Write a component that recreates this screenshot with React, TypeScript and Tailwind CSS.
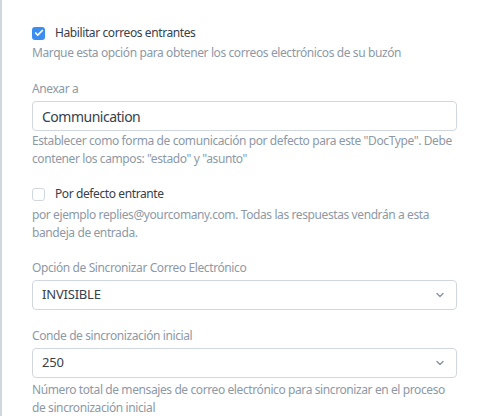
import { ChevronDown, Check } from "lucide-react";

const font = { fontFamily: '"Noto Sans", "Open Sans", sans-serif' };

function CheckRow({ checked, label }: { checked: boolean; label: string }) {
  return (
    <div className="flex items-center h-[18px]">
      {checked ? (
        <span className="w-[13px] h-[13px] rounded-[3px] bg-[#3b8ef0] flex items-center justify-center">
          <Check size={10} strokeWidth={4} className="text-white" />
        </span>
      ) : (
        <span className="w-[13px] h-[13px] rounded-[3px] border border-[#d1d8dd] bg-white" />
      )}
      <span className="ml-[10px] text-[12px] tracking-[-0.4px] text-[#36414c]">{label}</span>
    </div>
  );
}

function Help({ children }: { children: React.ReactNode }) {
  return <p className="text-[12px] leading-[18px] tracking-[-0.4px] text-[#8d99a6]">{children}</p>;
}

function Label({ children }: { children: React.ReactNode }) {
  return <div className="text-[12px] leading-[18px] tracking-[-0.4px] text-[#8d99a6] mb-[3px]">{children}</div>;
}

function Select({ value }: { value: string }) {
  return (
    <div className="h-[30px] border border-[#d1d8dd] rounded-[4px] flex items-center justify-between pl-[9px] pr-[10px] text-[13px] tracking-[-0.2px] text-[#36414c]">
      <span>{value}</span>
      <ChevronDown size={12} strokeWidth={3} className="text-[#8d99a6]" />
    </div>
  );
}

export default function App() {
  return (
    <div className="w-[492px] h-[416px] bg-white border-l-2 border-[#d1d8dd] overflow-hidden" style={font}>
      <div className="pl-[30px] pr-[35px] pt-[24px]">
        <CheckRow checked label="Habilitar correos entrantes" />
        <div className="mt-[2px]">
          <Help>Marque esta opción para obtener los correos electrónicos de su buzón</Help>
        </div>

        <div className="mt-[18px]">
          <Label>Anexar a</Label>
          <div className="h-[30px] border border-[#d1d8dd] rounded-[4px] flex items-center px-[9px] text-[14px] tracking-[-0.5px] text-[#36414c]">
            Communication
          </div>
          <div className="mt-[1px]">
            <Help>
              Establecer como forma de comunicación por defecto para este "DocType". Debe contener los campos: "estado" y "asunto"
            </Help>
          </div>
        </div>

        <div className="mt-[17px]">
          <CheckRow checked={false} label="Por defecto entrante" />
          <div className="mt-[3px]">
            <Help>por ejemplo replies@yourcomany.com. Todas las respuestas vendrán a esta bandeja de entrada.</Help>
          </div>
        </div>

        <div className="mt-[17px]">
          <Label>Opción de Sincronizar Correo Electrónico</Label>
          <Select value="INVISIBLE" />
        </div>

        <div className="mt-[17px]">
          <Label>Conde de sincronización inicial</Label>
          <div className="mt-[1px]">
            <Select value="250" />
          </div>
          <div className="mt-[3px]">
            <Help>Número total de mensajes de correo electrónico para sincronizar en el proceso de sincronización inicial</Help>
          </div>
        </div>
      </div>
    </div>
  );
}
